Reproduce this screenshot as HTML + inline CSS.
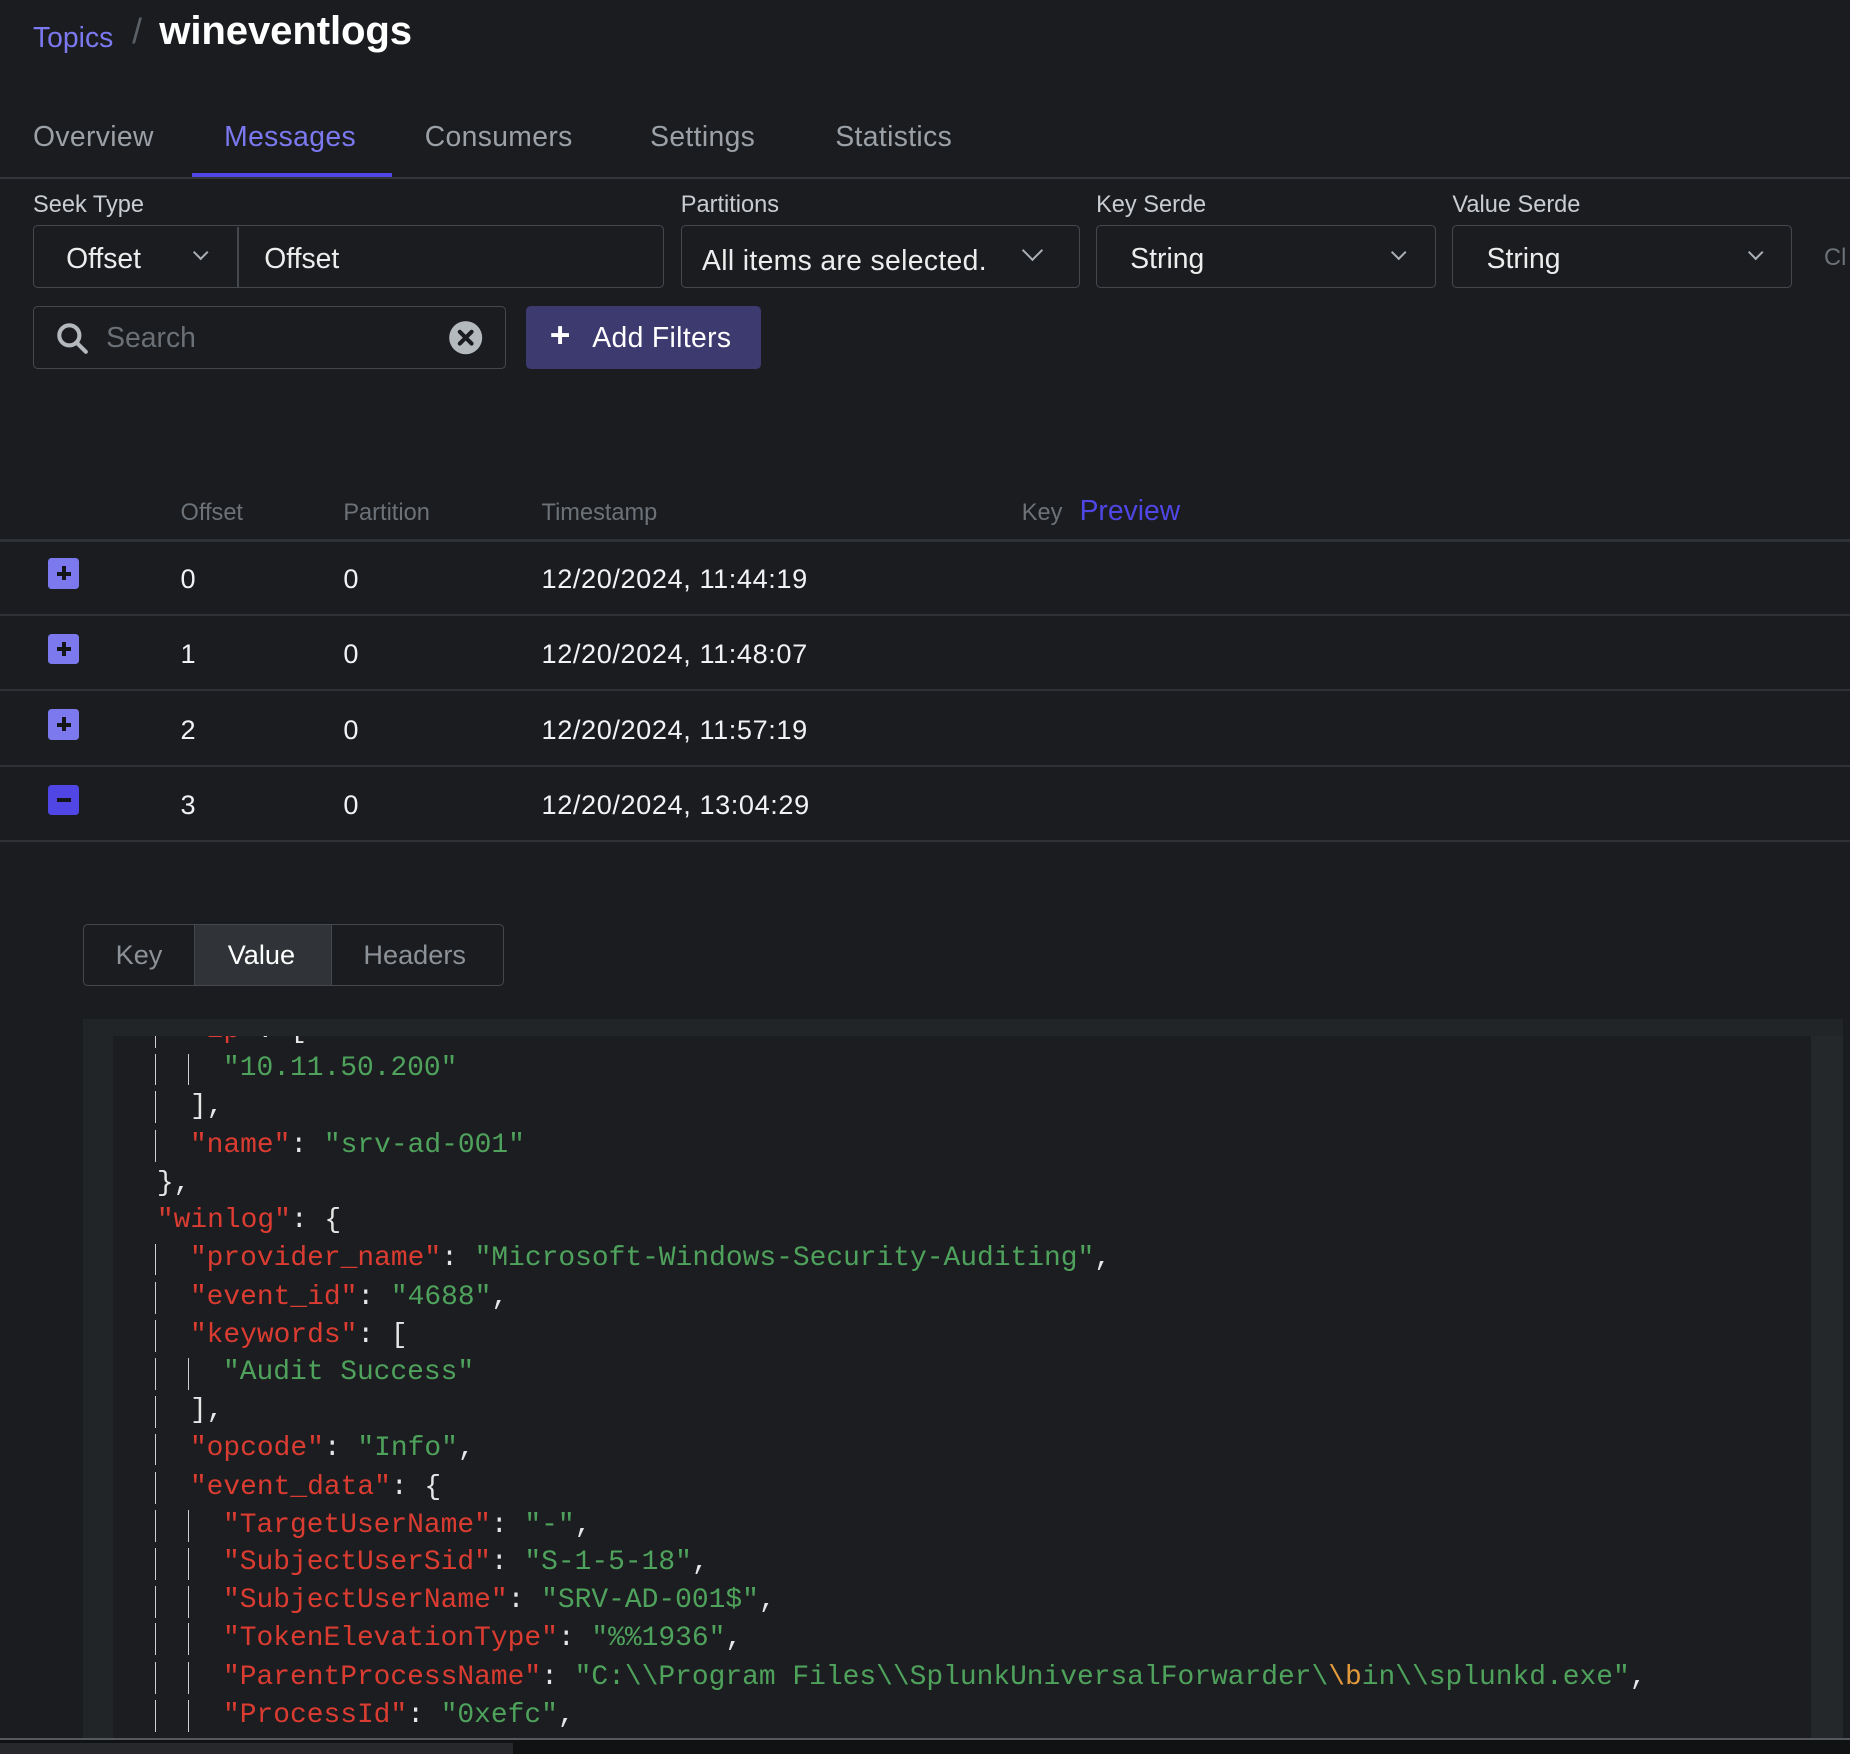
<!DOCTYPE html>
<html><head><meta charset="utf-8"><style>
html{zoom:1.17985}
body{margin:0;width:1568px;height:1487px;background:#1a1c1f;font-family:"Liberation Sans",sans-serif;position:relative;overflow:hidden;color:#e8e9ea}
.a{position:absolute;white-space:nowrap}
.lbl{font-size:20px;color:#c9cdd1;top:162px}
.box{position:absolute;border:1.5px solid #44484d;border-radius:4px;box-sizing:border-box;height:53px;top:191px}
.sel{font-size:24px;color:#eceded;top:205px}
.chev{position:absolute;width:11px;height:11px;border-right:2.5px solid #aab0b6;border-bottom:2.5px solid #aab0b6;transform:rotate(45deg)}
.tab{font-size:24px;color:#9ba1a7;top:102px;letter-spacing:0.3px}
.th{font-size:20px;color:#6c7278;top:423px}
.td{font-size:23px;color:#f1f2f3;letter-spacing:0.5px}
.hr{position:absolute;left:0;width:1568px;height:2px;background:#2e3236}
.ic{position:absolute;left:41px;width:26px;height:26px;border-radius:3px;background:#7c79ee}
.ic:before{content:"";position:absolute;left:7px;top:11.5px;width:12px;height:3.5px;background:#141519}
.ic.p:after{content:"";position:absolute;left:11.3px;top:7px;width:3.5px;height:12px;background:#141519}
.code{position:absolute;left:96px;top:878px;width:1439px;height:597px;background:#1b1d20;overflow:hidden}
.ln{position:absolute;left:0;height:32px;line-height:32px;font-family:"Liberation Mono",monospace;font-size:23.67px;white-space:pre;color:#e6e6e6;margin-top:2px}
.g{position:absolute;top:3px;width:1.5px;height:27px;background:#d0d0d0}
.k{color:#db3c31}.s{color:#4fa25c}.o{color:#e39a3d}
</style></head><body>
<div class="a" style="left:28px;top:18px;font-size:24px;color:#7b78f0">Topics</div>
<div class="a" style="left:112px;top:10px;font-size:30px;color:#5b6066">/</div>
<div class="a" style="left:135px;top:8px;font-size:34px;color:#fff;font-weight:bold;letter-spacing:-0.1px">wineventlogs</div>

<div class="a tab" style="left:28px">Overview</div>
<div class="a tab" style="left:190px;color:#7b78f0">Messages</div>
<div class="a tab" style="left:360px">Consumers</div>
<div class="a tab" style="left:551px">Settings</div>
<div class="a tab" style="left:708px">Statistics</div>
<div class="a" style="left:0;top:150px;width:1568px;height:2px;background:#32363b"></div>
<div class="a" style="left:163px;top:147px;width:169px;height:3px;background:#4f46e5"></div>

<div class="a lbl" style="left:28px">Seek Type</div>
<div class="a lbl" style="left:577px">Partitions</div>
<div class="a lbl" style="left:929px">Key Serde</div>
<div class="a lbl" style="left:1231px">Value Serde</div>

<div class="box" style="left:28px;width:535px"></div>
<div class="a" style="left:201px;top:192px;width:1.5px;height:51px;background:#44484d"></div>
<div class="a sel" style="left:56px">Offset</div>
<div class="chev" style="left:165px;top:209px;width:8px;height:8px;border-width:2px"></div>
<div class="a sel" style="left:224px">Offset</div>

<div class="box" style="left:577px;width:338px"></div>
<div class="a sel" style="left:595px;top:207px;letter-spacing:0.3px">All items are selected.</div>
<div class="chev" style="left:869px;top:206px"></div>

<div class="box" style="left:929px;width:288px"></div>
<div class="a sel" style="left:958px">String</div>
<div class="chev" style="left:1181px;top:209px;width:8px;height:8px;border-width:2px"></div>

<div class="box" style="left:1231px;width:288px"></div>
<div class="a sel" style="left:1260px">String</div>
<div class="chev" style="left:1483px;top:209px;width:8px;height:8px;border-width:2px"></div>
<div class="a" style="left:1546px;top:207px;font-size:20px;color:#6c7278">Cl</div>

<div class="box" style="left:28px;top:259px;width:401px;height:54px"></div>
<svg class="a" style="left:46px;top:271px" width="32" height="32" viewBox="0 0 32 32"><circle cx="13" cy="13" r="8.5" fill="none" stroke="#b4b9be" stroke-width="3.5"/><line x1="19" y1="19" x2="27" y2="27" stroke="#b4b9be" stroke-width="3.5" stroke-linecap="round"/></svg>
<div class="a" style="left:90px;top:272px;font-size:24px;color:#6a7076">Search</div>
<svg class="a" style="left:380px;top:271px" width="30" height="30" viewBox="0 0 30 30"><circle cx="15" cy="15" r="14" fill="#b4b9be"/><path d="M10 10L20 20M20 10L10 20" stroke="#1a1c1f" stroke-width="3.5" stroke-linecap="round"/></svg>

<div class="a" style="left:446px;top:259px;width:199px;height:54px;background:#3d3a6f;border-radius:4px"></div>
<div class="a" style="left:466px;top:268px;font-size:30px;color:#fff;font-weight:bold">+</div>
<div class="a" style="left:502px;top:272px;font-size:24px;color:#fff;letter-spacing:0.3px">Add Filters</div>

<div class="a th" style="left:153px">Offset</div>
<div class="a th" style="left:291px">Partition</div>
<div class="a th" style="left:459px">Timestamp</div>
<div class="a th" style="left:866px">Key</div>
<div class="a" style="left:915px;top:419px;font-size:24px;color:#4f46e5">Preview</div>

<div class="hr" style="top:457px"></div>
<div class="hr" style="top:520px"></div>
<div class="hr" style="top:584px"></div>
<div class="hr" style="top:648px"></div>
<div class="hr" style="top:712px"></div>

<div class="ic p" style="top:473px"></div>
<div class="ic p" style="top:537px"></div>
<div class="ic p" style="top:601px"></div>
<div class="ic" style="top:665px;background:#4f46e5"></div>

<div class="a td" style="left:153px;top:477px">0</div><div class="a td" style="left:291px;top:477px">0</div><div class="a td" style="left:459px;top:477px">12/20/2024, 11:44:19</div>
<div class="a td" style="left:153px;top:541px">1</div><div class="a td" style="left:291px;top:541px">0</div><div class="a td" style="left:459px;top:541px">12/20/2024, 11:48:07</div>
<div class="a td" style="left:153px;top:605px">2</div><div class="a td" style="left:291px;top:605px">0</div><div class="a td" style="left:459px;top:605px">12/20/2024, 11:57:19</div>
<div class="a td" style="left:153px;top:669px">3</div><div class="a td" style="left:291px;top:669px">0</div><div class="a td" style="left:459px;top:669px">12/20/2024, 13:04:29</div>

<div class="a" style="left:70px;top:783px;width:357px;height:53px;border:1.5px solid #44484d;border-radius:4px;box-sizing:border-box;overflow:hidden">
<div class="a" style="left:94px;top:0;width:115px;height:51px;background:#303438;border-left:1.5px solid #44484d;border-right:1.5px solid #44484d"></div>
</div>
<div class="a" style="left:98px;top:796px;font-size:23px;color:#8c9298">Key</div>
<div class="a" style="left:193px;top:796px;font-size:23px;color:#fff">Value</div>
<div class="a" style="left:308px;top:796px;font-size:23px;color:#8c9298">Headers</div>

<div class="a" style="left:70px;top:864px;width:1492px;height:620px;background:#212528"></div>
<div class="code">
<div class="ln" style="top:-22px"><i class="g" style="left:35px"></i><span style="position:absolute;left:65px"><span class="k">"ip"</span>: [</span></div>
<div class="ln" style="top:10px"><i class="g" style="left:35px"></i><i class="g" style="left:63px"></i><span style="position:absolute;left:93px"><span class="s">"10.11.50.200"</span></span></div>
<div class="ln" style="top:42px"><i class="g" style="left:35px"></i><span style="position:absolute;left:65px">],</span></div>
<div class="ln" style="top:75px"><i class="g" style="left:35px"></i><span style="position:absolute;left:65px"><span class="k">"name"</span>: <span class="s">"srv-ad-001"</span></span></div>
<div class="ln" style="top:107px"><span style="position:absolute;left:37px">},</span></div>
<div class="ln" style="top:139px"><span style="position:absolute;left:37px"><span class="k">"winlog"</span>: {</span></div>
<div class="ln" style="top:171px"><i class="g" style="left:35px"></i><span style="position:absolute;left:65px"><span class="k">"provider_name"</span>: <span class="s">"Microsoft-Windows-Security-Auditing"</span>,</span></div>
<div class="ln" style="top:204px"><i class="g" style="left:35px"></i><span style="position:absolute;left:65px"><span class="k">"event_id"</span>: <span class="s">"4688"</span>,</span></div>
<div class="ln" style="top:236px"><i class="g" style="left:35px"></i><span style="position:absolute;left:65px"><span class="k">"keywords"</span>: [</span></div>
<div class="ln" style="top:268px"><i class="g" style="left:35px"></i><i class="g" style="left:63px"></i><span style="position:absolute;left:93px"><span class="s">"Audit Success"</span></span></div>
<div class="ln" style="top:300px"><i class="g" style="left:35px"></i><span style="position:absolute;left:65px">],</span></div>
<div class="ln" style="top:332px"><i class="g" style="left:35px"></i><span style="position:absolute;left:65px"><span class="k">"opcode"</span>: <span class="s">"Info"</span>,</span></div>
<div class="ln" style="top:365px"><i class="g" style="left:35px"></i><span style="position:absolute;left:65px"><span class="k">"event_data"</span>: {</span></div>
<div class="ln" style="top:397px"><i class="g" style="left:35px"></i><i class="g" style="left:63px"></i><span style="position:absolute;left:93px"><span class="k">"TargetUserName"</span>: <span class="s">"-"</span>,</span></div>
<div class="ln" style="top:429px"><i class="g" style="left:35px"></i><i class="g" style="left:63px"></i><span style="position:absolute;left:93px"><span class="k">"SubjectUserSid"</span>: <span class="s">"S-1-5-18"</span>,</span></div>
<div class="ln" style="top:461px"><i class="g" style="left:35px"></i><i class="g" style="left:63px"></i><span style="position:absolute;left:93px"><span class="k">"SubjectUserName"</span>: <span class="s">"SRV-AD-001$"</span>,</span></div>
<div class="ln" style="top:493px"><i class="g" style="left:35px"></i><i class="g" style="left:63px"></i><span style="position:absolute;left:93px"><span class="k">"TokenElevationType"</span>: <span class="s">"%%1936"</span>,</span></div>
<div class="ln" style="top:526px"><i class="g" style="left:35px"></i><i class="g" style="left:63px"></i><span style="position:absolute;left:93px"><span class="k">"ParentProcessName"</span>: <span class="s">"C:\\Program Files\\SplunkUniversalForwarder\</span><span class="o">\b</span><span class="s">in\\splunkd.exe"</span>,</span></div>
<div class="ln" style="top:558px"><i class="g" style="left:35px"></i><i class="g" style="left:63px"></i><span style="position:absolute;left:93px"><span class="k">"ProcessId"</span>: <span class="s">"0xefc"</span>,</span></div>
<div class="ln" style="top:590px"><i class="g" style="left:35px"></i><i class="g" style="left:63px"></i><span style="position:absolute;left:93px"><span class="k">"NewProcessName"</span>: <span class="s">"C:\\Windows\\System32\\cmd.exe"</span>,</span></div>
</div>
<div class="a" style="left:1535px;top:878px;width:27px;height:597px;background:#24282b"></div>
<div class="a" style="left:0;top:1473px;width:1568px;height:2px;background:#55595e"></div>
<div class="a" style="left:0;top:1475px;width:1568px;height:12px;background:#111214"></div>
<div class="a" style="left:0;top:1477px;width:435px;height:10px;background:#26282b"></div>
</body></html>
